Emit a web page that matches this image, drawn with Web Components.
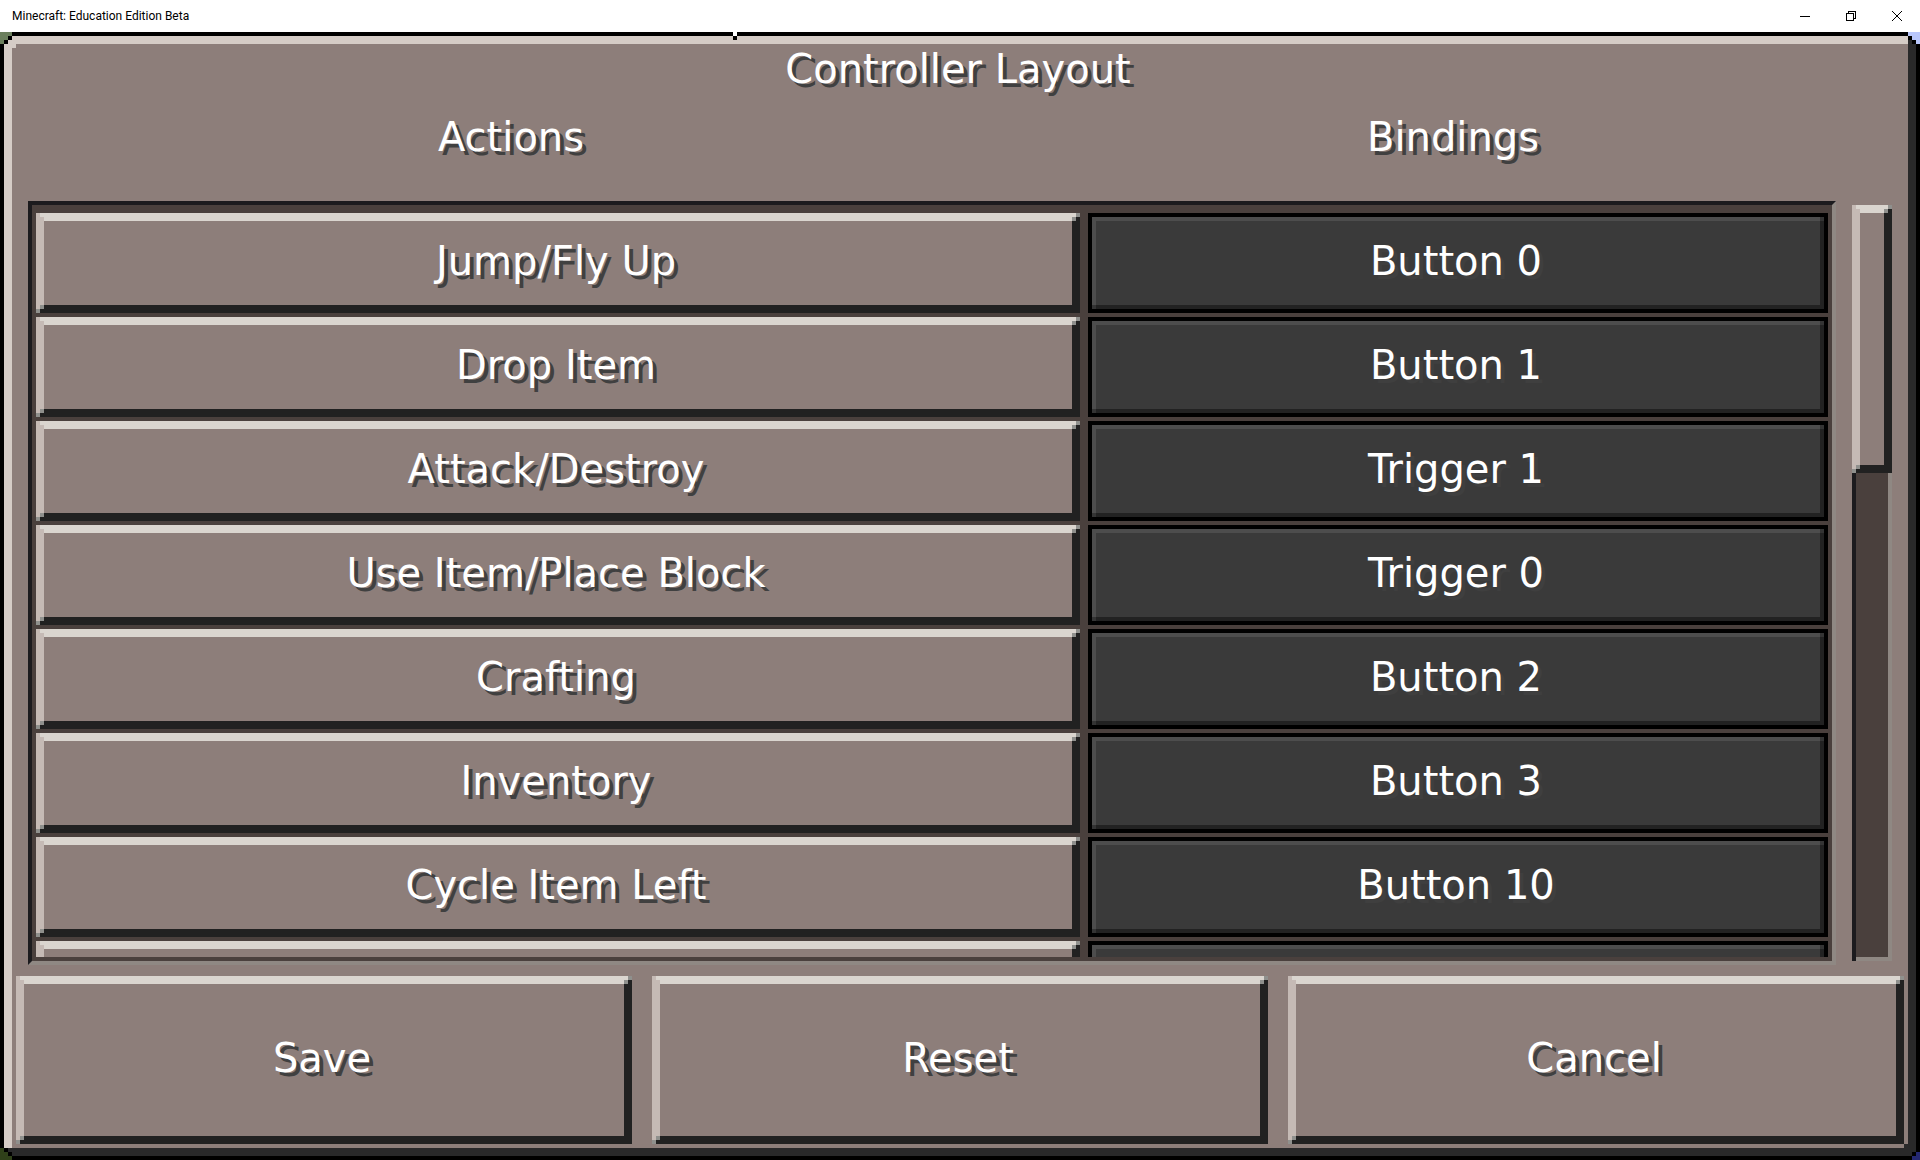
<!DOCTYPE html>
<html lang="en">
<head>
<meta charset="utf-8">
<title>Minecraft: Education Edition Beta</title>
<style>
  html, body { margin: 0; height: 100%; background: #000; }
  body { overflow: hidden; }
</style>
</head>
<body>
<controller-app></controller-app>
<script>
const define = (name, html, setup) => {
  const template = document.createElement('template');
  template.innerHTML = html;
  customElements.define(name, class extends HTMLElement {
    connectedCallback() {
      if (this.shadowRoot) return;
      this.attachShadow({ mode: 'open' }).append(template.content.cloneNode(true));
      if (setup) setup(this, this.shadowRoot);
    }
  });
};

/* Desktop window caption bar */
define('title-bar', `
<style>
  :host { display: flex; align-items: center; justify-content: space-between; height: 32px; flex: none;
    background: #fff; color: #000; font: 12px/16px Roboto, "Open Sans", sans-serif; }
  span { padding-left: 12px; }
  nav { display: flex; }
  button { width: 46px; height: 32px; padding: 0; border: 0; background: none; display: grid; place-items: center; }
  svg { display: block; fill: none; stroke: #000; }
</style>
<span><slot></slot></span>
<nav>
  <button aria-label="Minimize"><svg width="10" height="10" shape-rendering="crispEdges"><path d="M0 5.5H10"/></svg></button>
  <button aria-label="Restore"><svg width="10" height="10" shape-rendering="crispEdges"><path d="M.5 2.5H7.5V9.5H.5ZM2.5 2.5V.5H9.5V7.5H7.5"/></svg></button>
  <button aria-label="Close"><svg width="10" height="10"><path d="M0 0L10 10M10 0L0 10"/></svg></button>
</nav>`);

/* Raised button with a pixelled bevel */
define('bevel-button', `
<style>
  :host { display: block; min-width: 0; --g: linear-gradient(#8f908d, #8f908d); --l: linear-gradient(#c5bab5, #c5bab5);
    --t: linear-gradient(#dad5cf, #dad5cf); --d: linear-gradient(#212121, #212121); }
  button { display: flex; align-items: center; justify-content: center; width: 100%; height: 100%; margin: 0; border: 0;
    padding: 0 4px 4px 0; color: #fff; font: inherit; text-shadow: 4px 4px #404040;
    background:
      var(--g) right 0 top 0 / 4px 4px, var(--g) right 4px top 4px / 4px 4px,
      var(--g) left 0 bottom 0 / 4px 4px, var(--g) left 4px bottom 4px / 4px 4px,
      var(--l) left 0 top 0 / 4px 100%, var(--l) left 4px top 4px / 4px calc(100% - 8px),
      var(--d) right 0 bottom 0 / 4px calc(100% - 4px), var(--t) left 0 top 0 / 100% 8px,
      var(--d) right 0 top 0 / 8px 100%, var(--d) left 0 bottom 0 / 100% 8px;
    background-repeat: no-repeat; background-color: #8d7e7a; }
</style>
<button><slot></slot></button>`);

/* Sunken dark button that shows the bound input */
define('binding-button', `
<style>
  :host { display: block; min-width: 0; }
  button { display: flex; align-items: center; justify-content: center; width: 100%; height: 100%; margin: 0;
    padding: 0 4px 4px 0; border: 4px solid #000; color: #fff; font: inherit; text-shadow: 4px 4px #3f3f3f;
    background: linear-gradient(#4d4d4d, #4d4d4d) left top / calc(100% - 4px) 4px,
      linear-gradient(#4d4d4d, #4d4d4d) left top / 4px calc(100% - 4px),
      linear-gradient(#343434, #343434) right top / 4px 4px,
      linear-gradient(#343434, #343434) left bottom / 4px 4px,
      linear-gradient(#222, #222) right top / 4px 100%,
      linear-gradient(#222, #222) left bottom / 100% 4px;
    background-repeat: no-repeat; background-color: #3a3a3a; background-origin: padding-box; }
</style>
<button><slot></slot></button>`);

define('binding-row', `
<style>
  :host { display: grid; grid-template-columns: 1044fr 740fr; column-gap: 8px; height: 100px; flex: none; }
</style>
<bevel-button></bevel-button><binding-button></binding-button>`, (host, root) => {
  root.querySelector('bevel-button').textContent = host.getAttribute('action');
  root.querySelector('binding-button').textContent = host.getAttribute('binding');
});

/* Inset frame that clips its scrolled rows */
define('binding-list', `
<style>
  :host { display: flex; box-sizing: border-box; min-width: 0; flex: 1; padding: 8px 4px 4px; background: #4a403d;
    border: 4px solid; border-color: #1c1b1e #8f8883 #8f8883 #1c1b1e; }
  div { display: flex; flex-direction: column; gap: 4px; flex: 1; min-width: 0; overflow: hidden; }
</style>
<div><slot></slot></div>`);

define('scroll-track', `
<style>
  :host { display: block; box-sizing: border-box; width: 40px; flex: none; margin: 4px 0;
    background: linear-gradient(#1c1b1e, #1c1b1e) left / 4px 100% no-repeat,
      linear-gradient(#8f8883, #8f8883) right / 4px 100% no-repeat,
      linear-gradient(#8f8883, #8f8883) bottom / 100% 4px no-repeat, #4a403d; }
  bevel-button { height: 268px; }
</style>
<bevel-button aria-label="Scroll"></bevel-button>`);

/* Framed screen with stepped pixel corners */
define('game-panel', `
<style>
  :host { display: flex; flex-direction: column; position: relative; box-sizing: border-box; flex: 1; min-height: 0;
    border: 4px solid #000; background: #8d7e7a;
    box-shadow: inset 8px 8px #d5ccc6, inset -8px -8px #29292a; padding: 8px; }
  svg { position: absolute; width: 16px; height: 16px; shape-rendering: crispEdges; }
  .tl { left: -4px; top: -4px; } .tr { right: -4px; top: -4px; }
  .bl { left: -4px; bottom: -4px; } .br { right: -4px; bottom: -4px; }
  .notch { left: 38.13%; top: -4px; }
</style>
<slot></slot>
<svg class="tl" viewBox="0 0 4 4"><path fill="#6b7f5d" d="M0 0H3V1H2V2H1V3H0Z"/><path d="M2 1H3V2H2V3H1V2H2Z"/><path fill="#d5ccc6" d="M3 3H4V4H3Z"/></svg>
<svg class="tr" viewBox="0 0 4 4"><path fill="#b9c7fb" d="M1 0H4V3H3V2H2V1H1Z"/><path fill="#29292a" d="M1 2H2V3H3V4H1Z"/><path d="M1 1H2V2H3V3H2V2H1Z"/></svg>
<svg class="bl" viewBox="0 0 4 4"><path fill="#2f4019" d="M0 1H1V2H2V3H3V4H0Z"/><path d="M1 1H2V2H3V3H2V2H1Z"/><path fill="#29292a" d="M2 1H4V3H3V2H2Z"/><path fill="#d5ccc6" d="M1 0H3V1H1Z"/></svg>
<svg class="br" viewBox="0 0 4 4"><path fill="#29292a" d="M0 0H1V1H0Z"/><path fill="#242871" d="M3 2H4V4H2V3H3Z"/><path d="M2 2H3V3H2Z"/></svg>
<svg class="notch" viewBox="0 0 4 4"><path fill="#fff" d="M0 0H1V1H0Z"/><path d="M0 1H1V2H0Z"/></svg>`);

define('screen-header', `
<style>
  :host { display: block; flex: none; padding-top: 1px; color: #fff; text-shadow: 4px 4px #404040; text-align: center; }
  h1, h2 { margin: 0; font: inherit; }
  h1 { line-height: 48px; padding-right: 4px; }
  .columns { display: grid; grid-template-columns: 998fr 886fr; line-height: 48px; padding: 20px 12px 40px 0; }
</style>
<h1><slot name="title"></slot></h1>
<div class="columns"><h2><slot name="actions"></slot></h2><h2><slot name="bindings"></slot></h2></div>`);

define('controller-app', `
<style>
  :host { display: flex; flex-direction: column; height: 100vh; font: 40px/48px "DejaVu Sans", sans-serif; }
  main { display: flex; flex: 1; min-height: 0; gap: 16px; padding: 0 16px; }
  footer { display: flex; gap: 20px; height: 168px; flex: none; padding: 11px 4px 4px; }
  footer bevel-button { flex: 1; }
</style>
<title-bar>Minecraft: Education Edition Beta</title-bar>
<game-panel>
  <screen-header>
    <span slot="title">Controller Layout</span>
    <span slot="actions">Actions</span>
    <span slot="bindings">Bindings</span>
  </screen-header>
  <main>
    <binding-list>
      <binding-row action="Jump/Fly Up" binding="Button 0"></binding-row>
      <binding-row action="Drop Item" binding="Button 1"></binding-row>
      <binding-row action="Attack/Destroy" binding="Trigger 1"></binding-row>
      <binding-row action="Use Item/Place Block" binding="Trigger 0"></binding-row>
      <binding-row action="Crafting" binding="Button 2"></binding-row>
      <binding-row action="Inventory" binding="Button 3"></binding-row>
      <binding-row action="Cycle Item Left" binding="Button 10"></binding-row>
      <binding-row action="" binding=""></binding-row>
    </binding-list>
    <scroll-track></scroll-track>
  </main>
  <footer>
    <bevel-button>Save</bevel-button>
    <bevel-button>Reset</bevel-button>
    <bevel-button>Cancel</bevel-button>
  </footer>
</game-panel>`);
</script>
</body>
</html>
